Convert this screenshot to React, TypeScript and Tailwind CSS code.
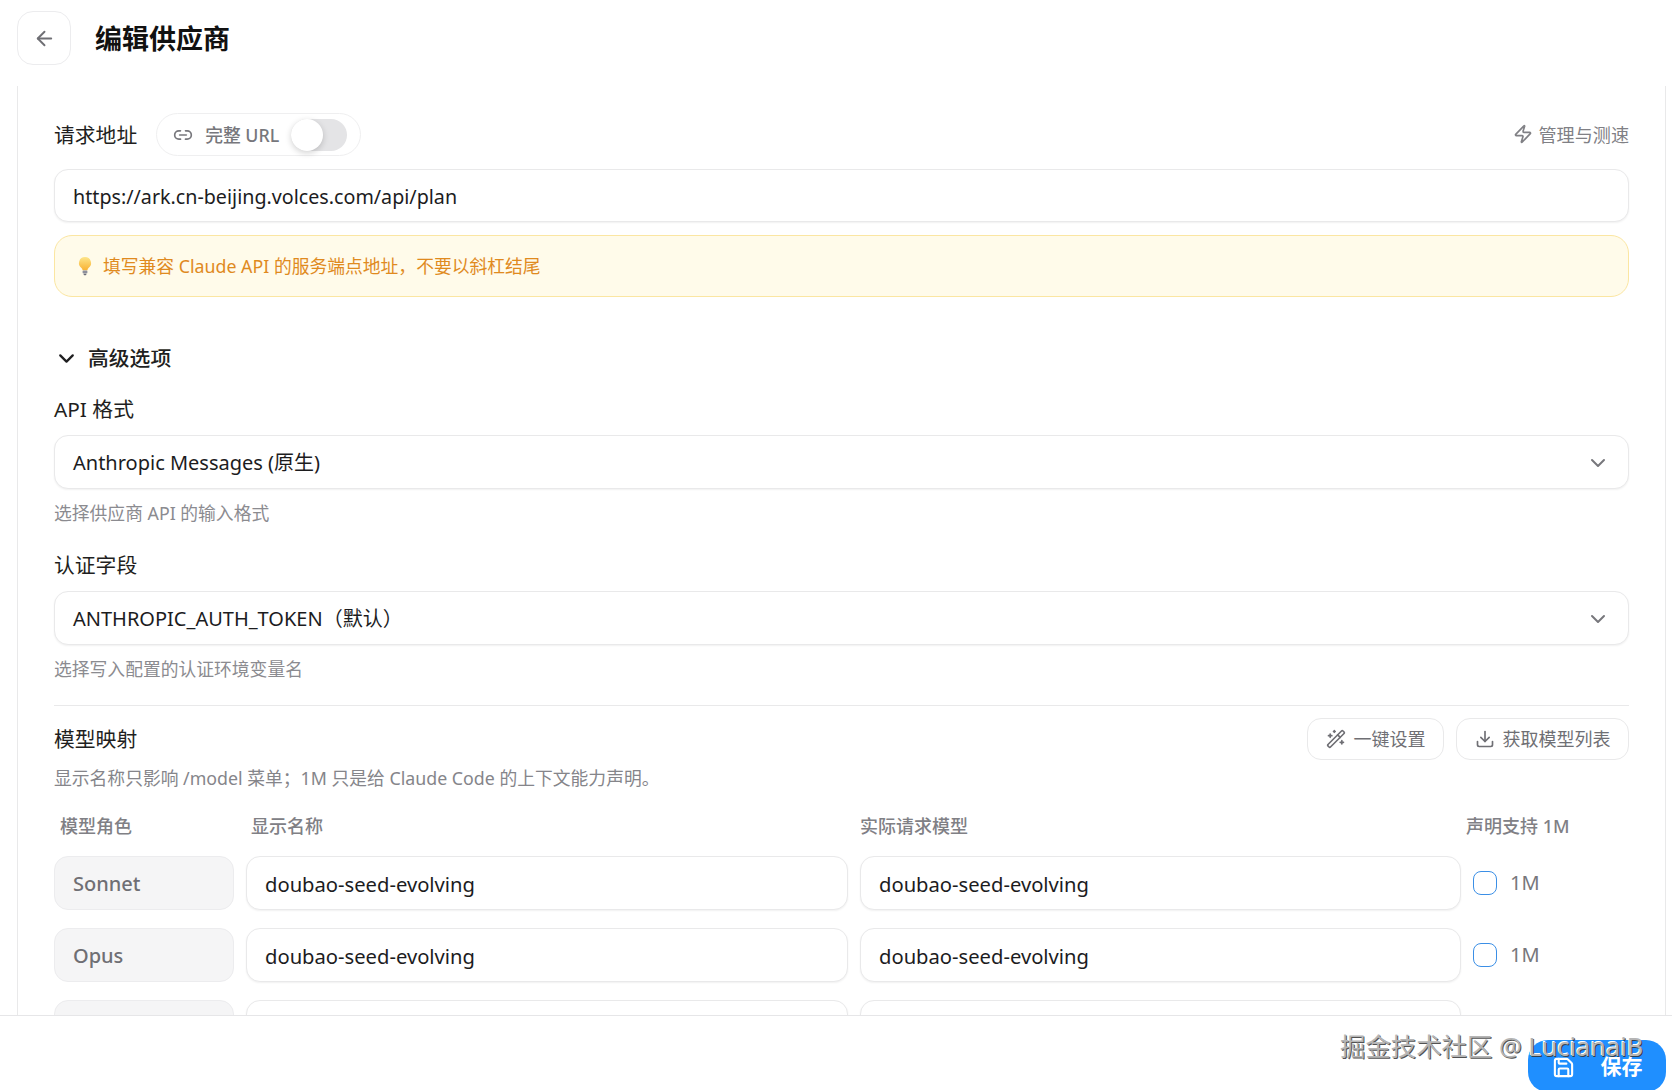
import { ArrowLeft, ChevronDown, Download, Link2, Save, WandSparkles, Zap } from 'lucide-react';

const inputClass =
  'flex h-[54px] items-center rounded-[14px] border border-[#e9e9ea] bg-white pt-[2px] text-[20px] text-[#1c1c1e] shadow-[0_1px_2px_rgba(0,0,0,0.06)]';

const Bulb = () => (
  <svg width="16" height="20" viewBox="0 0 16 20" className="shrink-0">
    <defs>
      <linearGradient id="bulb" x1="0" y1="0" x2="0" y2="1">
        <stop offset="0" stopColor="#fde58a" />
        <stop offset="1" stopColor="#f9b233" />
      </linearGradient>
    </defs>
    <path d="M8 1a6 6 0 0 0-3.5 10.9c.7.6 1 1.3 1 2.3h5c0-1 .3-1.7 1-2.3A6 6 0 0 0 8 1z" fill="url(#bulb)" />
    <rect x="5.6" y="14.6" width="4.8" height="3" rx="0.8" fill="#8d8f9c" />
    <rect x="6.6" y="17.8" width="2.8" height="1.4" rx="0.7" fill="#6b6d7a" />
  </svg>
);

const SelectField = ({ label, value, hint, top }: { label: string; value: string; hint: string; top: string }) => (
  <div className={top}>
    <div className="text-[20.8px] leading-[28px] text-[#1f1f21]">{label}</div>
    <div className={`${inputClass} mt-[12px] justify-between pl-[18px] pr-[18px]`}>
      <span>{value}</span>
      <ChevronDown size={24} strokeWidth={2} className="text-[#77777c]" />
    </div>
    <div className="mt-[11px] text-[17.8px] leading-[26px] text-[#8b8b90]">{hint}</div>
  </div>
);

// the last row sits under the footer, only its top edge shows
const ModelRow = ({ role, model }: { role?: string; model?: string }) => (
  <div className="grid grid-cols-[180px_602px_601px_1fr] gap-x-3">
    <div className="flex h-[54px] items-center rounded-[14px] border border-[#ececee] bg-[#f5f5f6] pl-[18px] pt-[1px] text-[20px] font-medium text-[#6f6f74]">
      {role}
    </div>
    <div className={`${inputClass} pl-[18px] !text-[20.2px]`}>{model}</div>
    <div className={`${inputClass} pl-[18px] !text-[20.2px]`}>{model}</div>
    {role && (
      <div className="flex items-center gap-[13px]">
        <span className="h-6 w-6 rounded-[8px] border border-[#3b8fe6] bg-white" />
        <span className="text-[20px] text-[#77777c]">1M</span>
      </div>
    )}
  </div>
);

export default function App() {
  return (
    <div className="relative flex h-[1090px] flex-col overflow-hidden bg-white font-['Noto_Sans','Noto_Sans_CJK_SC',sans-serif]">
      {/* Header */}
      <header className="flex h-[86px] shrink-0 items-start pl-[17px] pt-[11px]">
        <button className="flex h-[54px] w-[54px] items-center justify-center rounded-[16px] border border-[#ececee] text-[#6f6f74]">
          <ArrowLeft size={23} />
        </button>
        <h1 className="ml-[24px] mt-[10px] text-[27px] font-bold leading-[36px] text-[#111]">编辑供应商</h1>
      </header>

      {/* Form */}
      <main className="ml-[17px] mr-[6px] min-h-0 flex-1 overflow-hidden border-x border-[#e9e9ea] pl-[36px] pr-[36px] pt-[27px]">
        <div className="flex h-[43px] items-center justify-between">
          <div className="flex items-center">
            <span className="pt-[2px] text-[20.8px] text-[#1f1f21]">请求地址</span>
            <div className="ml-[19px] flex h-[43px] w-[205px] items-center rounded-full border border-[#efeff0] pl-[16px] text-[#77777c]">
              <Link2 size={20} />
              <span className="ml-[12px] whitespace-nowrap pt-[1px] text-[17.8px] font-medium">完整 URL</span>
              <span className="relative ml-[12px] h-[32px] w-[56px] rounded-full bg-[#e4e4e6]">
                <span className="absolute left-0 top-0 h-[32px] w-[32px] rounded-full bg-white shadow-[0_2px_6px_rgba(0,0,0,0.18)]" />
              </span>
            </div>
          </div>
          <div className="flex items-center gap-[6px] text-[#808085]">
            <Zap size={20} />
            <span className="pt-[2px] text-[18.1px]">管理与测速</span>
          </div>
        </div>

        <div className={`${inputClass} mt-[13px] !h-[53px] pl-[18px] !text-[19.7px]`}>https://ark.cn-beijing.volces.com/api/plan</div>

        <div className="mt-[13px] flex h-[62px] items-center gap-[10px] rounded-[18px] border border-[#fbe6a2] bg-[#fffbea] pl-[22px] text-[17.8px] text-[#e08a1e]">
          <Bulb />
          <span>填写兼容 Claude API 的服务端点地址，不要以斜杠结尾</span>
        </div>

        <div className="mt-[46px] flex h-[30px] items-center">
          <ChevronDown size={25} strokeWidth={2.2} className="text-[#1f1f21]" />
          <span className="ml-[9px] pt-[1px] text-[20.8px] font-medium text-[#1f1f21]">高级选项</span>
        </div>

        <SelectField top="mt-[22px]" label="API 格式" value="Anthropic Messages (原生)" hint="选择供应商 API 的输入格式" />
        <SelectField top="mt-[25px]" label="认证字段" value="ANTHROPIC_AUTH_TOKEN（默认）" hint="选择写入配置的认证环境变量名" />

        <div className="mt-[23px] border-t border-[#e9e9ea]" />

        <div className="mt-[12px] flex items-start justify-between">
          <div>
            <div className="mt-[7px] text-[20.8px] leading-[28px] text-[#1f1f21]">模型映射</div>
            <div className="mt-[12px] text-[17.8px] leading-[26px] text-[#85858a]">
              显示名称只影响 /model 菜单；1M 只是给 Claude Code 的上下文能力声明。
            </div>
          </div>
          <div className="flex gap-3 text-[18px] text-[#6f6f74]">
            <button className="flex h-[42px] w-[137px] items-center justify-center gap-[8px] rounded-[14px] border border-[#e9e9ea]">
              <WandSparkles size={20} />
              <span>一键设置</span>
            </button>
            <button className="flex h-[42px] w-[173px] items-center justify-center gap-[8px] rounded-[14px] border border-[#e9e9ea]">
              <Download size={20} />
              <span>获取模型列表</span>
            </button>
          </div>
        </div>

        <div className="mt-[22px] grid grid-cols-[180px_602px_601px_1fr] gap-x-3 text-[18px] font-medium leading-[26px] text-[#808085]">
          <span className="pl-[6px]">模型角色</span>
          <span className="pl-[5px]">显示名称</span>
          <span>实际请求模型</span>
          <span className="-ml-[7px] whitespace-nowrap">声明支持 1M</span>
        </div>

        <div className="mt-[17px] flex flex-col gap-[18px]">
          <ModelRow role="Sonnet" model="doubao-seed-evolving" />
          <ModelRow role="Opus" model="doubao-seed-evolving" />
          <ModelRow />
        </div>
      </main>

      {/* Footer */}
      <footer className="relative z-10 flex h-[75px] shrink-0 items-end justify-end border-t border-[#e6e6e8] bg-white pr-[6px]">
        <button className="-mb-[2px] flex h-[52px] w-[138px] items-center justify-center gap-[26px] rounded-[20px] bg-[#1f8fff] pt-[2px] text-[21px] font-bold text-white">
          <Save size={23} strokeWidth={2.2} />
          <span>保存</span>
        </button>
      </footer>

      {/* Watermark */}
      <div className="absolute left-[1340px] top-[1028px] z-20 whitespace-nowrap text-[25.4px] leading-[36px] text-[#b5b5b5] [text-shadow:1px_1px_0_rgba(50,50,50,0.85),-1px_-1px_0_#fff]">
        掘金技术社区 @ LucianaiB
      </div>
    </div>
  );
}
